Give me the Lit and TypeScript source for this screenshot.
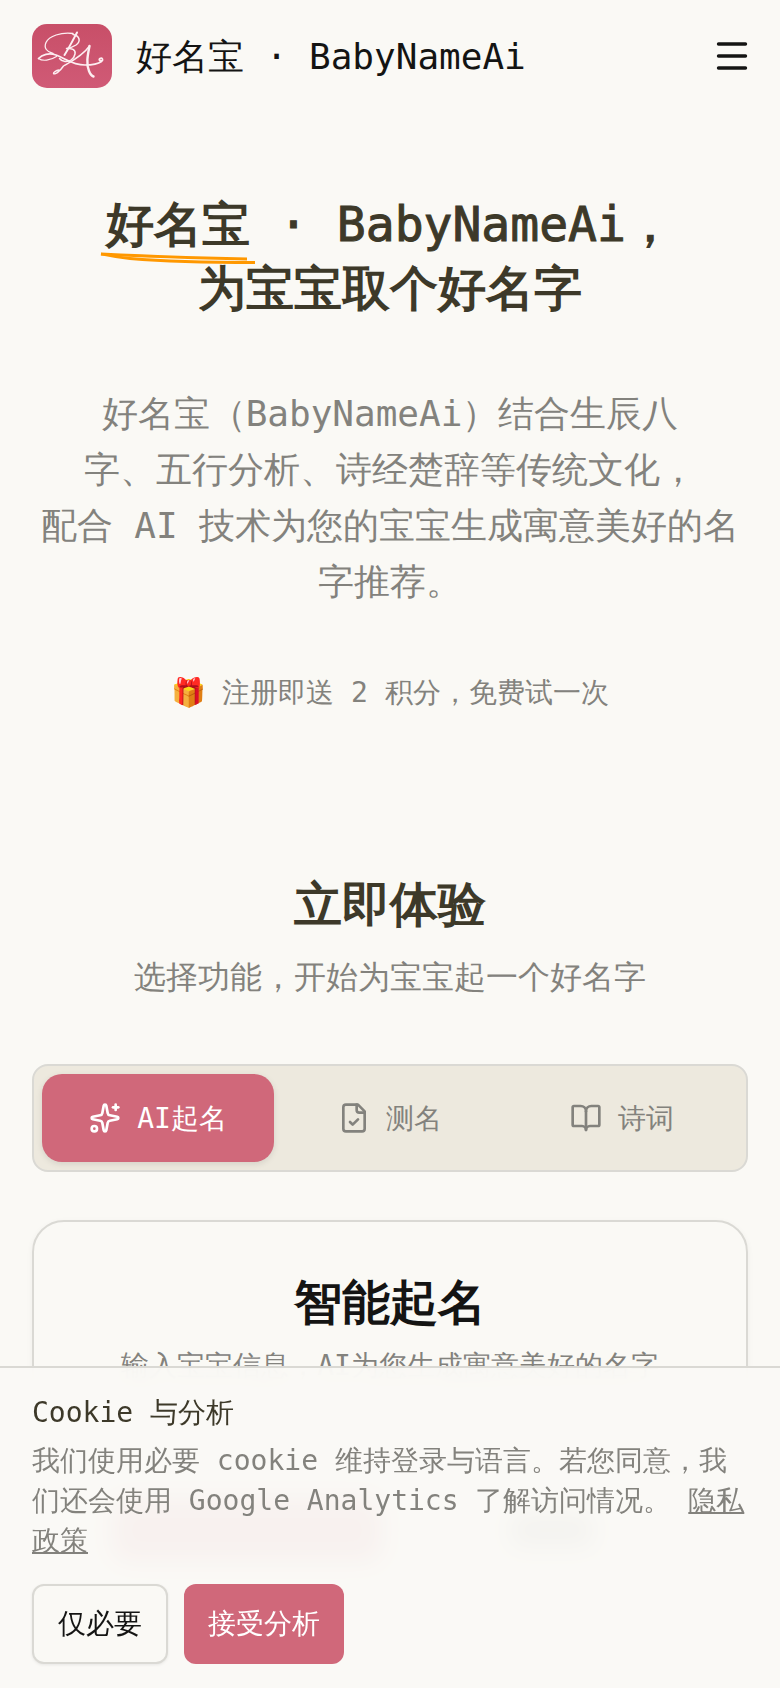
import { css, html, LitElement } from "lit";
import { customElement } from "lit/decorators.js";

const sparkles = html`<svg class="icon" viewBox="0 0 24 24"><path d="M11.017 2.814a1 1 0 0 1 1.966 0l1.051 5.558a2 2 0 0 0 1.594 1.594l5.558 1.051a1 1 0 0 1 0 1.966l-5.558 1.051a2 2 0 0 0-1.594 1.594l-1.051 5.558a1 1 0 0 1-1.966 0l-1.051-5.558a2 2 0 0 0-1.594-1.594l-5.558-1.051a1 1 0 0 1 0-1.966l5.558-1.051a2 2 0 0 0 1.594-1.594z"/><path d="M20 2v4"/><path d="M22 4h-4"/><circle cx="4" cy="20" r="2"/></svg>`;
const fileCheck = html`<svg class="icon" viewBox="0 0 24 24"><path d="M15 2H6a2 2 0 0 0-2 2v16a2 2 0 0 0 2 2h12a2 2 0 0 0 2-2V7Z"/><path d="M14 2v4a2 2 0 0 0 2 2h4"/><path d="m9 15 2 2 4-4"/></svg>`;
const bookOpen = html`<svg class="icon" viewBox="0 0 24 24"><path d="M12 7v14"/><path d="M3 18a1 1 0 0 1-1-1V4a1 1 0 0 1 1-1h5a4 4 0 0 1 4 4 4 4 0 0 1 4-4h5a1 1 0 0 1 1 1v13a1 1 0 0 1-1 1h-6a3 3 0 0 0-3 3 3 3 0 0 0-3-3z"/></svg>`;
const menu = html`<svg class="menu" viewBox="0 0 48 48"><path d="M10.500 12h27"/><path d="M10.500 24h27"/><path d="M10.500 36h27"/></svg>`;

const logo = html`<svg class="logo" viewBox="0 0 80 64">
  <defs>
    <linearGradient id="lg" x1="0" y1="0" x2="0" y2="1">
      <stop offset="0" stop-color="#c84f68" />
      <stop offset="1" stop-color="#d05a76" />
    </linearGradient>
  </defs>
  <rect width="80" height="64" rx="15" fill="url(#lg)" />
  <g fill="none" stroke="#fdeef1" stroke-linecap="round" stroke-linejoin="round">
    <path stroke-width="1.300" d="M21 29.500C15 28 11.500 24 14 18.500 17 12 29 8 41 9.500" />
    <path stroke-width="2" d="M45 8.500C41 16 37 24 32.500 31" />
    <path stroke-width="1.500" d="M41 10.500c7 1.500 8 7 3 10.500-3 2-6 3-9.500 3.500 5-.5 9.500 1 8.500 5.500-1 5.500-6 8-10 7.500-2.500-.3-4.500-1.500-5.500-3" />
    <path stroke-width="1.700" d="M6.500 34.500C10 30.500 17 28.500 24 31c9 3 16 10 29 10 6 0 13-1 16.500-3.500 2.500-2 .5-4-1.500-3-1.500.8-.5 2.500 1 2" />
    <path stroke-width="1.200" d="M6.500 34.500c4 3 12 2 18-2" />
    <path stroke-width="1.400" d="M27 46c-3 .5-6 2.500-5.500 3.500 1 1.500 6-1.500 10-7.500 6-3.500 19-10 26-20" />
    <path stroke-width="2.400" d="M57.500 22c-2 10-3.500 18-.500 25 1 2.500 2.500 5 4.500 5.500" />
  </g>
</svg>`;

@customElement("app-root")
export class AppRoot extends LitElement {
  static styles = css`
    :host {
      display: block;
      min-height: 100vh;
      background: #faf9f5;
      color: #3d3929;
      font-family: "DejaVu Sans Mono", monospace;
      font-size: 28px;
      line-height: 40px;
    }
    .nav {
      display: flex;
      align-items: center;
      padding: 24px 32px;
      color: #141413;
    }
    .logo {
      width: 80px;
      height: 64px;
      flex: none;
    }
    .brand {
      margin-left: 24px;
      padding-top: 2px;
      font-size: 36px;
      line-height: 48px;
      flex: 1;
    }
    .menu {
      width: 48px;
      height: 48px;
      margin-right: -8px;
      fill: none;
      stroke: #141413;
      stroke-width: 3.4;
      stroke-linecap: round;
    }
    .hero {
      padding: 80px 32px 0;
      text-align: center;
    }
    h1 {
      margin: 0;
      font-size: 48px;
      line-height: 64px;
      font-weight: 700;
    }
    .latin {
      font-weight: 400;
      -webkit-text-stroke: 1px #3d3929;
    }
    .mark {
      position: relative;
      display: inline-block;
    }
    .scribble {
      position: absolute;
      left: -6px;
      top: 61px;
      width: 156px;
      height: 12px;
      fill: none;
      stroke: #ff9800;
      stroke-width: 2.8;
      overflow: visible;
    }
    .lead {
      margin: 66px 0 0;
      font-size: 36px;
      line-height: 56px;
      color: #83827d;
    }
    .gift {
      margin: 63px 0 0;
      display: flex;
      justify-content: center;
      align-items: center;
      gap: 16px;
      color: #83827d;
    }
    .try {
      padding: 159px 32px 0;
    }
    .try-head {
      text-align: center;
    }
    h2 {
      margin: 0;
      font-size: 48px;
      line-height: 64px;
      font-weight: 700;
    }
    .try-sub {
      margin: 17px 0 0;
      font-size: 32px;
      line-height: 48px;
      color: #83827d;
    }
    .tabs {
      margin-top: 63px;
      display: grid;
      grid-template-columns: repeat(3, 1fr);
      padding: 8px;
      background: #ede9de;
      border: 2px solid #dad9d4;
      border-radius: 16px;
    }
    .tab {
      height: 88px;
      display: flex;
      align-items: center;
      justify-content: center;
      gap: 16px;
      color: #83827d;
      border-radius: 20px;
    }
    .tab span {
      padding-top: 2px;
    }
    .tab.on {
      background: #d0687a;
      color: #fff;
      box-shadow: 0 2px 6px rgba(0, 0, 0, 0.1);
    }
    .icon {
      width: 32px;
      height: 32px;
      fill: none;
      stroke: currentColor;
      stroke-width: 2;
      stroke-linecap: round;
      stroke-linejoin: round;
    }
    .card {
      margin-top: 48px;
      padding: 48px 48px 64px;
      border: 2px solid #dad9d4;
      border-radius: 32px;
      box-shadow: 0 2px 6px rgba(0, 0, 0, 0.05);
      text-align: center;
    }
    .card h3 {
      margin: 0;
      font-size: 48px;
      line-height: 64px;
      font-weight: 700;
      color: #141413;
    }
    .card p {
      margin: 12px 0 0;
      color: #83827d;
    }
    .choices {
      margin-top: 112px;
      display: flex;
      align-items: center;
      gap: 130px;
      padding-left: 30px;
    }
    .choice {
      width: 270px;
      height: 64px;
      border-radius: 16px;
      background: #d0687a;
    }
    .choice-label {
      width: 80px;
      height: 32px;
      background: #83827d;
    }
    .cookie {
      position: fixed;
      left: 0;
      right: 0;
      bottom: 0;
      padding: 24px 32px;
      background: rgba(250, 249, 245, 0.95);
      border-top: 2px solid #dad9d4;
      backdrop-filter: blur(12px);
    }
    .cookie-title {
      margin: 0;
      padding-top: 1px;
    }
    .cookie-text {
      margin: 8px 0 0;
      color: #83827d;
    }
    .cookie-text a {
      color: inherit;
      text-decoration: underline;
    }
    .cookie-actions {
      margin-top: 23px;
      display: flex;
      gap: 16px;
    }
    button {
      font: inherit;
      height: 80px;
      padding: 0 24px;
      border-radius: 12px;
      border: none;
    }
    .plain {
      background: #faf9f5;
      border: 2px solid #dad9d4;
      color: #141413;
      box-shadow: 0 1px 3px rgba(0, 0, 0, 0.08);
    }
    .accept {
      background: #d0687a;
      color: #fff;
    }
  `;

  render() {
    return html`
      <header class="nav">
        ${logo}
        <div class="brand">好名宝 · BabyNameAi</div>
        ${menu}
      </header>

      <section class="hero">
        <h1>
          <span class="mark"
            >好名宝<svg class="scribble" viewBox="0 0 156 12">
              <path d="M1 1C40 3 100 5 147 6" />
              <path d="M155 9.500C110 9.500 60 8 30 5.500 20 4.500 10 3 1 1" /></svg></span
          ><span class="latin"> · BabyNameAi</span>，<br />为宝宝取个好名字
        </h1>
        <p class="lead">
          好名宝（BabyNameAi）结合生辰八<br />字、五行分析、诗经楚辞等传统文化，<br />配合 AI
          技术为您的宝宝生成寓意美好的名字推荐。
        </p>
        <div class="gift"><span>🎁</span><span>注册即送 2 积分，免费试一次</span></div>
      </section>

      <section class="try">
        <div class="try-head">
          <h2>立即体验</h2>
          <p class="try-sub">选择功能，开始为宝宝起一个好名字</p>
        </div>
        <div class="tabs">
          <div class="tab on">${sparkles}<span>AI起名</span></div>
          <div class="tab">${fileCheck}<span>测名</span></div>
          <div class="tab">${bookOpen}<span>诗词</span></div>
        </div>
        <div class="card">
          <h3>智能起名</h3>
          <p>输入宝宝信息，AI为您生成寓意美好的名字</p>
          <div class="choices">
            <div class="choice"></div>
            <div class="choice-label"></div>
          </div>
        </div>
      </section>

      <aside class="cookie">
        <p class="cookie-title">Cookie 与分析</p>
        <p class="cookie-text">
          我们使用必要 cookie 维持登录与语言。若您同意，我们还会使用 Google Analytics 了解访问情况。
          <a href="#">隐私政策</a>
        </p>
        <div class="cookie-actions">
          <button class="plain">仅必要</button>
          <button class="accept">接受分析</button>
        </div>
      </aside>
    `;
  }
}
